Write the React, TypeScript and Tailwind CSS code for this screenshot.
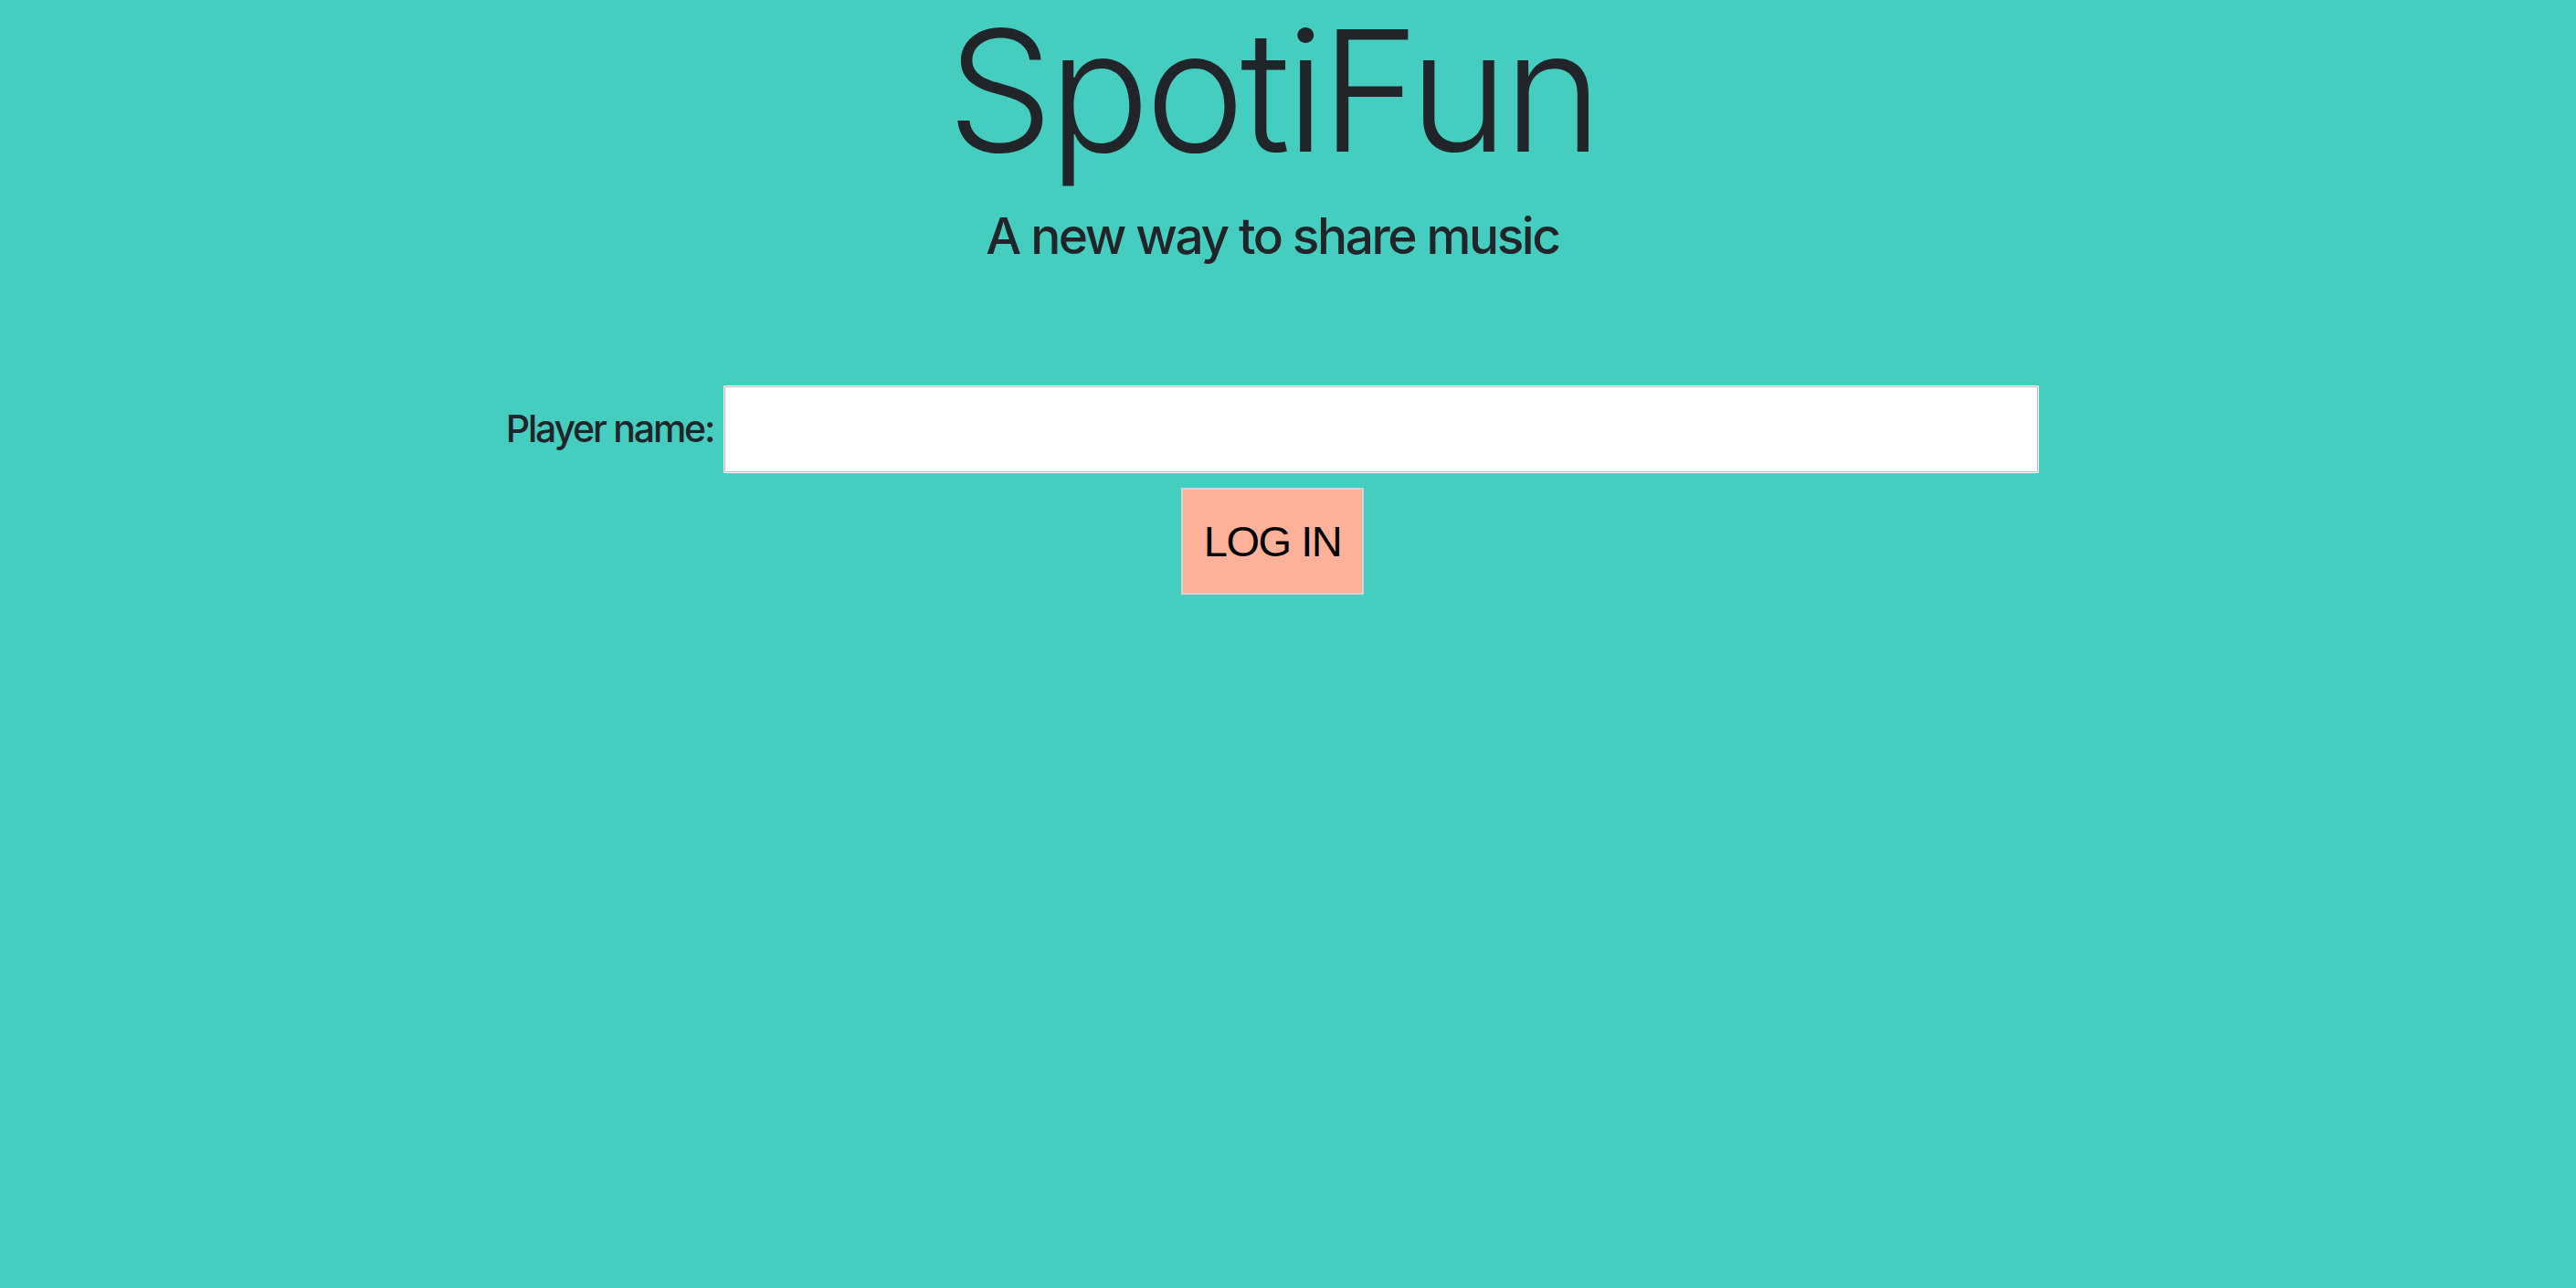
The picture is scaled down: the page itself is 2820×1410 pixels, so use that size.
import { useState } from 'react';

// SpotiFun login landing
export default function App() {
  const [name, setName] = useState('');

  return (
    <div className="min-h-screen w-full bg-[#45cec0] text-[#212529]" style={{ fontFamily: 'Inter, "Noto Sans", sans-serif' }}>
      <div className="flex flex-col items-center pr-[34px]">
        <h1 className="text-[184px] font-light leading-[1.08] tracking-[-5px]">SpotiFun</h1>
        <p className="mt-[32px] text-[55px] font-medium leading-none tracking-[-2.4px]">A new way to share music</p>

        <div className="mt-[136px] flex items-center">
          <label htmlFor="player" className="text-[41px] font-medium leading-none tracking-[-2.2px]">
            Player name:
          </label>
          <input
            id="player"
            value={name}
            onChange={(e) => setName(e.target.value)}
            className="ml-[11px] h-[96px] w-[1440px] border border-white bg-white shadow-[inset_0_0_0_1px_#bdbdbd] outline-none"
          />
        </div>

        <button
          className="mt-[16px] h-[117px] w-[200px] border-2 border-[#cfd6d4] bg-[#fdb199] text-[47px] leading-none tracking-[-1.5px] text-black"
          style={{ fontFamily: '"Liberation Sans", Arial, sans-serif' }}
        >
          LOG IN
        </button>
      </div>
    </div>
  );
}
